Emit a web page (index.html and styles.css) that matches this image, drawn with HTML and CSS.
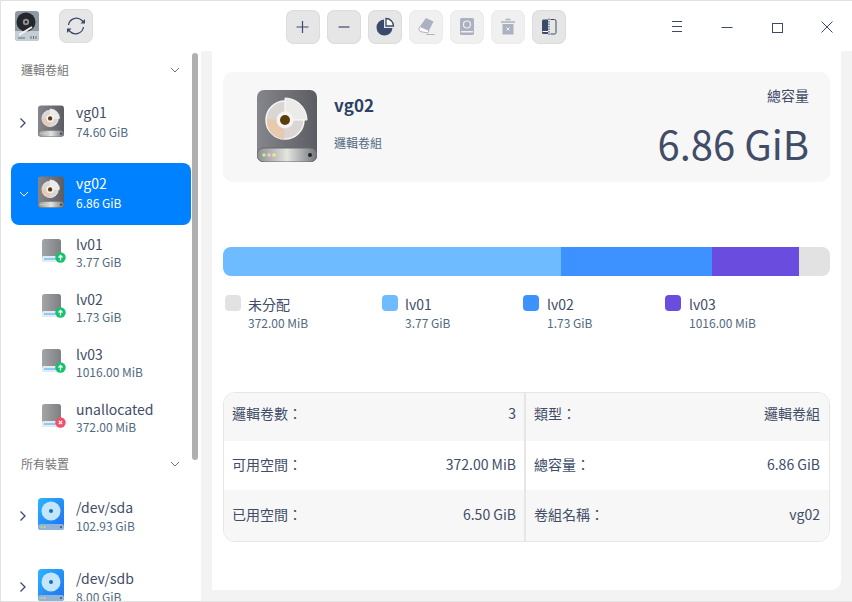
FILE: index.html
```html
<!DOCTYPE html>
<html lang="zh-Hant">
<head>
  <title>磁盤管理器</title>
  <meta charset="utf-8">
  <link rel="stylesheet" href="styles.css">
</head>
<body>
<svg class="defs" width="0" height="0">
  <defs>
    <linearGradient id="bodyGrey" x1="0" y1="0" x2="1" y2="0">
      <stop offset="0" stop-color="#85868c"/><stop offset="1" stop-color="#5c5d63"/>
    </linearGradient>
    <linearGradient id="baseGrey" x1="0" y1="0" x2="1" y2="0">
      <stop offset="0" stop-color="#8d8f8e"/><stop offset=".5" stop-color="#e4e4e0"/><stop offset="1" stop-color="#70757b"/>
    </linearGradient>
    <linearGradient id="bodyBlue" x1="0" y1="0" x2="1" y2="1">
      <stop offset="0" stop-color="#2bb4ff"/><stop offset="1" stop-color="#1f6ff0"/>
    </linearGradient>
    <linearGradient id="lvGrey" x1="0" y1="0" x2="1" y2="0">
      <stop offset="0" stop-color="#a4a5a7"/><stop offset="1" stop-color="#7f8083"/>
    </linearGradient>
    <symbol id="vgDisk" viewBox="0 0 60 72">
      <rect x="0" y="0" width="60" height="72" rx="7" fill="url(#bodyGrey)"/>
      <path d="M0 64a7 7 0 0 1 7-6h46a7 7 0 0 1 7 6v1a7 7 0 0 1-7 7H7a7 7 0 0 1-7-7z" fill="url(#baseGrey)" stroke="#656a70" stroke-width="1"/>
      <circle cx="28" cy="30" r="19" fill="#dbd6d3" stroke="#f6f6f6" stroke-width="1.5"/>
      <path d="M28 30 L14 43 A19 19 0 0 0 27 49 Z" fill="#e8c9ae"/>
      <path d="M28 30 L10 29 A19 19 0 0 0 14 43 Z" fill="#e8c9ae"/>
      <path d="M28 8 A22 22 0 0 1 50 30 H28 Z" fill="#ecebea" stroke="#fbfbfb" stroke-width="1"/>
      <circle cx="28" cy="30" r="8.5" fill="#f4f4f4"/>
      <circle cx="28" cy="30" r="5" fill="#5b3c0c"/>
      <circle cx="7" cy="65" r="1.8" fill="#b7ef9a"/>
      <circle cx="12" cy="65" r="1.8" fill="#f6c4cc"/>
      <circle cx="17" cy="65" r="1.8" fill="#f6e39a"/>
      <circle cx="53" cy="65" r="2" fill="#222"/>
    </symbol>
    <symbol id="devDisk" viewBox="0 0 26 32">
      <rect x="0" y="0" width="26" height="32" rx="3.5" fill="url(#bodyBlue)"/>
      <rect x="0" y="26" width="26" height="6" rx="2.5" fill="#8fb4d8"/>
      <circle cx="13" cy="13" r="9.5" fill="#c4e6fc"/>
      <circle cx="13" cy="13" r="2" fill="#0f6fb2"/>
      <circle cx="3.5" cy="29" r="1" fill="#b9e08a"/>
      <circle cx="6.5" cy="29" r="1" fill="#e9d48a"/>
      <circle cx="23" cy="29" r="1.1" fill="#3d5f80"/>
    </symbol>
    <symbol id="lvDisk" viewBox="0 0 24 24">
      <rect x="1" y="0" width="19" height="23" rx="2.5" fill="url(#lvGrey)"/>
      <rect x="1" y="17" width="19" height="6" rx="1.5" fill="#e3eaf0"/>
      <rect x="3" y="19" width="15" height="2" fill="#8accf7"/>
    </symbol>
  </defs>
</svg>

<div class="window">
  <header class="titlebar">
    <div class="title-left">
      <svg class="app-icon" width="24" height="30" viewBox="0 0 24 30">
        <rect width="24" height="30" rx="3" fill="#8f9aa3"/>
        <path d="M0 20h24v7a3 3 0 0 1-3 3H3a3 3 0 0 1-3-3z" fill="#c5ced4"/>
        <circle cx="11" cy="11" r="9.5" fill="#26272b"/>
        <circle cx="11" cy="11" r="3.2" fill="#8d8f94"/>
        <circle cx="11" cy="11" r="1.2" fill="#222"/>
        <path d="M4 24l13-8" stroke="#f4f4f4" stroke-width="2"/>
        <path d="M3 27h7M16 25v3M18.500 25v3M21 25v3" stroke="#63707a" stroke-width="1"/>
      </svg>
      <button class="tool refresh">
        <svg width="34" height="34" viewBox="0 0 34 34" fill="none" stroke="#3b4a6b" stroke-width="1.300">
          <path d="M9.500 16a8 8 0 0 1 13.500-4.500l1.500 2"/>
          <path d="M24.500 18a8 8 0 0 1-13.500 4.500l-1.500-2"/>
          <path d="M21.500 14.500h4.500v-4.500z" fill="#3b4a6b" stroke="none"/>
          <path d="M12.500 19.500H8v4.500z" fill="#3b4a6b" stroke="none"/>
        </svg>
      </button>
    </div>

    <nav class="toolbar">
      <button class="tool">
        <svg width="34" height="34" viewBox="0 0 34 34" stroke="#3b4a6b" stroke-width="1.200"><path d="M16.500 11v12M10.500 17h12"/></svg>
      </button>
      <button class="tool">
        <svg width="34" height="34" viewBox="0 0 34 34" stroke="#3b4a6b" stroke-width="1.200"><path d="M11.500 17h11"/></svg>
      </button>
      <button class="tool">
        <svg width="34" height="34" viewBox="0 0 34 34">
          <path d="M16 9.500V18h8.500A8 8 0 1 1 16 9.500z" fill="#3b4a6b"/>
          <path d="M18 8.500a7.500 7.500 0 0 1 7.500 7.500H18z" fill="#fff" stroke="#3b4a6b" stroke-width="1.300"/>
        </svg>
      </button>
      <button class="tool off">
        <svg width="34" height="34" viewBox="0 0 34 34">
          <path d="M17 8l7.500 3.500-4.500 9-9-4.200z" fill="#abb1c0"/>
          <path d="M11 16.500l9 4-1.300 2.500-7.500-1.500-1.500-2.500z" fill="#fff" stroke="#abb1c0"/>
          <path d="M17.500 24.500h8" stroke="#abb1c0" stroke-width="1"/>
        </svg>
      </button>
      <button class="tool off">
        <svg width="34" height="34" viewBox="0 0 34 34">
          <rect x="10" y="8" width="14" height="17" rx="1.500" fill="#abb1c0"/>
          <rect x="11" y="21" width="12" height="1.500" fill="#f0f0f0"/>
          <circle cx="17" cy="14.500" r="3.500" fill="none" stroke="#f0f0f0" stroke-width="1.200"/>
        </svg>
      </button>
      <button class="tool off">
        <svg width="34" height="34" viewBox="0 0 34 34">
          <path d="M14.500 9.500h5M10 12h14" stroke="#abb1c0" stroke-width="1.500"/>
          <rect x="11.500" y="14" width="11" height="10.500" fill="#abb1c0"/>
          <path d="M15.500 17.500l3 3M18.500 17.500l-3 3" stroke="#f0f0f0" stroke-width="1"/>
        </svg>
      </button>
      <button class="tool">
        <svg width="34" height="34" viewBox="0 0 34 34">
          <path d="M16 9.500h-4.500a1.500 1.500 0 0 0-1.500 1.500v11.500a1.500 1.500 0 0 0 1.500 1.500H16z" fill="#3b4a6b"/>
          <path d="M18.500 9.500h4a1.500 1.500 0 0 1 1.500 1.500v11.500a1.500 1.500 0 0 1-1.500 1.500h-4" fill="none" stroke="#3b4a6b"/>
          <path d="M17 8.500v16.500" stroke="#3b4a6b" stroke-dasharray="1.500 1"/>
          <path d="M10.500 21.500H16" stroke="#fff"/>
        </svg>
      </button>
    </nav>

    <div class="window-btns">
      <button class="win-btn">
        <svg width="50" height="20" viewBox="0 0 50 20" stroke="#3b4a6b"><path d="M20 5.500h10M20 10.500h10M20 15.500h10"/></svg>
      </button>
      <button class="win-btn">
        <svg width="50" height="20" viewBox="0 0 50 20" stroke="#3b4a6b"><path d="M19.500 11.500h11"/></svg>
      </button>
      <button class="win-btn">
        <svg width="50" height="20" viewBox="0 0 50 20" stroke="#3b4a6b" fill="none"><rect x="20.500" y="7.500" width="10" height="9"/></svg>
      </button>
      <button class="win-btn">
        <svg width="50" height="20" viewBox="0 0 50 20" stroke="#3b4a6b" fill="none"><path d="M19.500 5.500l11 11M30.500 5.500l-11 11"/></svg>
      </button>
    </div>
  </header>

  <div class="main">
    <aside class="sidebar">
      <div class="scrollbar"></div>

      <div class="group-head first">
        <span>邏輯卷組</span>
        <svg class="head-arrow" width="10" height="6" viewBox="0 0 10 6" fill="none" stroke="#6f7680"><path d="M1 1l4 4 4-4"/></svg>
      </div>

      <div class="item vg">
        <svg class="arrow closed" width="8" height="12" viewBox="0 0 8 12" fill="none" stroke="#3b4a6b" stroke-width="1.300"><path d="M1.500 1.500L6 6l-4.500 4.500"/></svg>
        <svg class="disk" width="26" height="32"><use href="#vgDisk"/></svg>
        <div class="item-text"><div class="name">vg01</div><div class="size">74.60 GiB</div></div>
      </div>

      <div class="item vg selected">
        <svg class="arrow" width="10" height="12" viewBox="0 0 10 12" fill="none" stroke="#fff"><path d="M1 4l4 4 4-4"/></svg>
        <svg class="disk" width="26" height="32"><use href="#vgDisk"/></svg>
        <div class="item-text"><div class="name">vg02</div><div class="size">6.86 GiB</div></div>
      </div>

      <div class="sub-item">
        <div class="lv-icon">
          <svg width="24" height="24"><use href="#lvDisk"/></svg>
          <svg class="badge" width="11" height="11" viewBox="0 0 11 11"><circle cx="5.500" cy="5.500" r="5.200" fill="#13c46a"/><path d="M5.500 8.500V3.500M3.500 5.500l2-2 2 2" stroke="#fff" fill="none" stroke-width="1.300"/></svg>
        </div>
        <div class="item-text"><div class="name">lv01</div><div class="size">3.77 GiB</div></div>
      </div>
      <div class="sub-item">
        <div class="lv-icon">
          <svg width="24" height="24"><use href="#lvDisk"/></svg>
          <svg class="badge" width="11" height="11" viewBox="0 0 11 11"><circle cx="5.500" cy="5.500" r="5.200" fill="#13c46a"/><path d="M5.500 8.500V3.500M3.500 5.500l2-2 2 2" stroke="#fff" fill="none" stroke-width="1.300"/></svg>
        </div>
        <div class="item-text"><div class="name">lv02</div><div class="size">1.73 GiB</div></div>
      </div>
      <div class="sub-item">
        <div class="lv-icon">
          <svg width="24" height="24"><use href="#lvDisk"/></svg>
          <svg class="badge" width="11" height="11" viewBox="0 0 11 11"><circle cx="5.500" cy="5.500" r="5.200" fill="#13c46a"/><path d="M5.500 8.500V3.500M3.500 5.500l2-2 2 2" stroke="#fff" fill="none" stroke-width="1.300"/></svg>
        </div>
        <div class="item-text"><div class="name">lv03</div><div class="size">1016.00 MiB</div></div>
      </div>
      <div class="sub-item">
        <div class="lv-icon">
          <svg width="24" height="24"><use href="#lvDisk"/></svg>
          <svg class="badge" width="11" height="11" viewBox="0 0 11 11"><circle cx="5.500" cy="5.500" r="5.200" fill="#f0516a"/><path d="M3.800 3.800l3.400 3.400M7.200 3.800l-3.400 3.400" stroke="#fff" fill="none" stroke-width="1.200"/></svg>
        </div>
        <div class="item-text"><div class="name">unallocated</div><div class="size">372.00 MiB</div></div>
      </div>

      <div class="group-head second">
        <span>所有裝置</span>
        <svg class="head-arrow" width="10" height="6" viewBox="0 0 10 6" fill="none" stroke="#6f7680"><path d="M1 1l4 4 4-4"/></svg>
      </div>

      <div class="item dev">
        <svg class="arrow closed" width="8" height="12" viewBox="0 0 8 12" fill="none" stroke="#3b4a6b" stroke-width="1.300"><path d="M1.500 1.500L6 6l-4.500 4.500"/></svg>
        <svg class="disk" width="26" height="32"><use href="#devDisk"/></svg>
        <div class="item-text"><div class="name">/dev/sda</div><div class="size">102.93 GiB</div></div>
      </div>
      <div class="item dev">
        <svg class="arrow closed" width="8" height="12" viewBox="0 0 8 12" fill="none" stroke="#3b4a6b" stroke-width="1.300"><path d="M1.500 1.500L6 6l-4.500 4.500"/></svg>
        <svg class="disk" width="26" height="32"><use href="#devDisk"/></svg>
        <div class="item-text"><div class="name">/dev/sdb</div><div class="size">8.00 GiB</div></div>
      </div>
    </aside>

    <section class="panel">
      <div class="summary">
        <svg class="big-disk" width="60" height="72"><use href="#vgDisk"/></svg>
        <div class="summary-name">
          <div class="vg-name">vg02</div>
          <div class="vg-type">邏輯卷組</div>
        </div>
        <div class="summary-total">
          <div class="total-label">總容量</div>
          <div class="total-value">6.86 GiB</div>
        </div>
      </div>

      <div class="bar">
        <div class="seg lv01"></div>
        <div class="seg lv02"></div>
        <div class="seg lv03"></div>
        <div class="seg free"></div>
      </div>

      <div class="legend">
        <div class="legend-item w-first"><span class="swatch free"></span><div><div class="legend-name">未分配</div><div class="legend-size">372.00 MiB</div></div></div>
        <div class="legend-item w-a"><span class="swatch lv01"></span><div><div class="legend-name">lv01</div><div class="legend-size">3.77 GiB</div></div></div>
        <div class="legend-item w-b"><span class="swatch lv02"></span><div><div class="legend-name">lv02</div><div class="legend-size">1.73 GiB</div></div></div>
        <div class="legend-item"><span class="swatch lv03"></span><div><div class="legend-name">lv03</div><div class="legend-size">1016.00 MiB</div></div></div>
      </div>

      <div class="details">
        <div class="row">
          <div class="cell left"><span>邏輯卷數：</span><span>3</span></div>
          <div class="cell right"><span>類型：</span><span>邏輯卷組</span></div>
        </div>
        <div class="row">
          <div class="cell left"><span>可用空間：</span><span>372.00 MiB</span></div>
          <div class="cell right"><span>總容量：</span><span>6.86 GiB</span></div>
        </div>
        <div class="row">
          <div class="cell left"><span>已用空間：</span><span>6.50 GiB</span></div>
          <div class="cell right"><span>卷組名稱：</span><span>vg02</span></div>
        </div>
      </div>
    </section>
  </div>
</div>
</body>
</html>
```

FILE: styles.css
```css
* {
  box-sizing: border-box;
}

html, body {
  margin: 0;
  height: 100%;
  overflow: hidden;
}

body {
  font-family: "Noto Sans CJK TC", "Noto Sans", sans-serif;
  color: #414d68;
  background: #fff;
}

.defs {
  position: absolute;
}

button {
  padding: 0;
  border: 0;
  background: none;
  font: inherit;
}

svg {
  display: block;
}

.window {
  width: 852px;
  height: 602px;
  display: flex;
  flex-direction: column;
  border-top: 1px solid #e2e2e2;
  border-left: 1px solid #e2e2e2;
  border-bottom: 1px solid #e2e2e2;
  background: #f3f3f3;
  overflow: hidden;
}

/* title bar */

.titlebar {
  flex: none;
  height: 50px;
  margin-left: -1px;
  background: #fff;
  display: grid;
  grid-template-columns: 1fr auto 1fr;
  align-items: center;
}

.title-left {
  display: flex;
  align-items: center;
  padding-left: 15px;
}

.app-icon {
  margin-right: 20px;
}

.toolbar {
  display: flex;
  gap: 7px;
  margin-top: 2px;
}

.tool {
  width: 34px;
  height: 34px;
  border-radius: 8px;
  background: #e6e6e6;
  box-shadow: inset 0 0 0 1px #dcdcdc;
}

.tool.off {
  background: #f0f0f0;
  box-shadow: inset 0 0 0 1px #ececec;
}

.window-btns {
  display: flex;
  justify-content: flex-end;
}

.win-btn {
  width: 50px;
  height: 50px;
  display: flex;
  align-items: center;
  justify-content: center;
}

/* sidebar */

.main {
  flex: 1;
  display: flex;
  min-height: 0;
}

.sidebar {
  flex: none;
  width: 200px;
  position: relative;
  background: #fff;
  overflow: hidden;
}

.scrollbar {
  position: absolute;
  left: 191px;
  top: 2px;
  width: 6px;
  height: 407px;
  border-radius: 3px;
  background: #b0b0b0;
}

.group-head {
  height: 39px;
  padding: 0 21px 0 20px;
  display: flex;
  align-items: center;
  justify-content: space-between;
  font-size: 12px;
  color: #767676;
}

.group-head.first {
  height: 41px;
  padding-bottom: 4px;
}

.group-head.second {
  padding-bottom: 2px;
}

.item {
  height: 62px;
  margin: 0 10px 9px;
  display: flex;
  align-items: center;
  border-radius: 8px;
  padding-left: 8px;
}

.item.selected {
  margin-bottom: 0;
  background: #0081ff;
  color: #fff;
}

.item.selected .size {
  color: #fff;
}

.item.dev {
  padding-top: 2px;
}

.arrow {
  width: 10px;
}

.arrow.closed {
  margin: 0 1px 0 -1px;
}

.disk {
  margin-left: 9px;
  margin-top: -4px;
}

.item-text {
  margin-left: 12px;
}

.item.vg .item-text {
  margin-top: -3px;
}

.item.vg .name {
  margin-bottom: 1px;
}

.name {
  font-size: 14px;
  line-height: 20px;
}

.size {
  font-size: 12px;
  line-height: 18px;
  color: #526a7f;
}

.sub-item {
  height: 55px;
  display: flex;
  align-items: center;
  padding-left: 40px;
}

.sub-item .item-text {
  margin-left: 11px;
}

.sub-item .name {
  margin-bottom: -1px;
}

.lv-icon {
  position: relative;
  width: 24px;
  height: 24px;
  margin-top: -3px;
}

.badge {
  position: absolute;
  right: -1px;
  bottom: 0;
}

/* right panel */

.panel {
  flex: none;
  width: 629px;
  height: 539px;
  margin-left: 11px;
  padding: 21px 11px 0;
  border-radius: 0 0 10px 0;
  background: #fff;
}

.summary {
  height: 110px;
  padding: 18px 21px 0 34px;
  display: flex;
  border-radius: 10px;
  background: #f7f7f7;
}

.big-disk {
  flex: none;
}

.summary-name {
  margin-left: 17px;
  flex: 1;
}

.vg-name {
  font-size: 17px;
  font-weight: 700;
  line-height: 24px;
  color: #2c4163;
  margin-top: 3px;
}

.vg-type {
  margin-top: 17px;
  font-size: 12px;
  line-height: 18px;
  color: #526a7f;
}

.summary-total {
  text-align: right;
}

.total-label {
  font-size: 14px;
  line-height: 20px;
  margin-top: -5px;
}

.total-value {
  font-size: 40px;
  line-height: 52px;
  margin-top: 12px;
}

.bar {
  display: flex;
  height: 29px;
  margin-top: 65px;
  border-radius: 8px;
  overflow: hidden;
}

.seg.lv01 { width: 338px; }
.seg.lv02 { width: 151px; }
.seg.lv03 { width: 87px; }
.seg.free { flex: 1; }

.lv01 { background: #6ebcff; }
.lv02 { background: #3e92ff; }
.lv03 { background: #6a4ddf; }
.free { background: #e2e2e2; }

.legend {
  display: flex;
  margin-top: 18px;
  padding-left: 2px;
}

.legend-item {
  display: flex;
}

.w-first { width: 157px; }
.w-a { width: 141px; }
.w-b { width: 142px; }

.swatch {
  flex: none;
  width: 16px;
  height: 16px;
  margin-top: 1px;
  margin-right: 7px;
  border-radius: 4px;
}

.legend-item:nth-child(n+3) .swatch {
  margin-right: 8px;
}

.legend-name {
  font-size: 14px;
  line-height: 20px;
}

.legend-size {
  font-size: 12px;
  line-height: 18px;
  color: #526a7f;
}

.details {
  margin-top: 60px;
  height: 150px;
  border: 1px solid #e6e6e6;
  border-radius: 12px;
  overflow: hidden;
  display: flex;
  flex-direction: column;
}

.row {
  display: flex;
  height: 49px;
  font-size: 14px;
}

.row:nth-child(odd) {
  background: #f7f7f7;
}

.row:first-child {
  height: 48px;
}

.row:first-child .cell {
  padding-bottom: 8px;
}

.row:last-child {
  flex: 1;
}

.cell {
  display: flex;
  align-items: center;
  justify-content: space-between;
  padding-bottom: 4px;
}

.cell.left {
  width: 302px;
  padding-left: 8px;
  padding-right: 8px;
  border-right: 2px solid #e6e6e6;
}

.cell.right {
  flex: 1;
  padding-left: 8px;
  padding-right: 9px;
}
```
